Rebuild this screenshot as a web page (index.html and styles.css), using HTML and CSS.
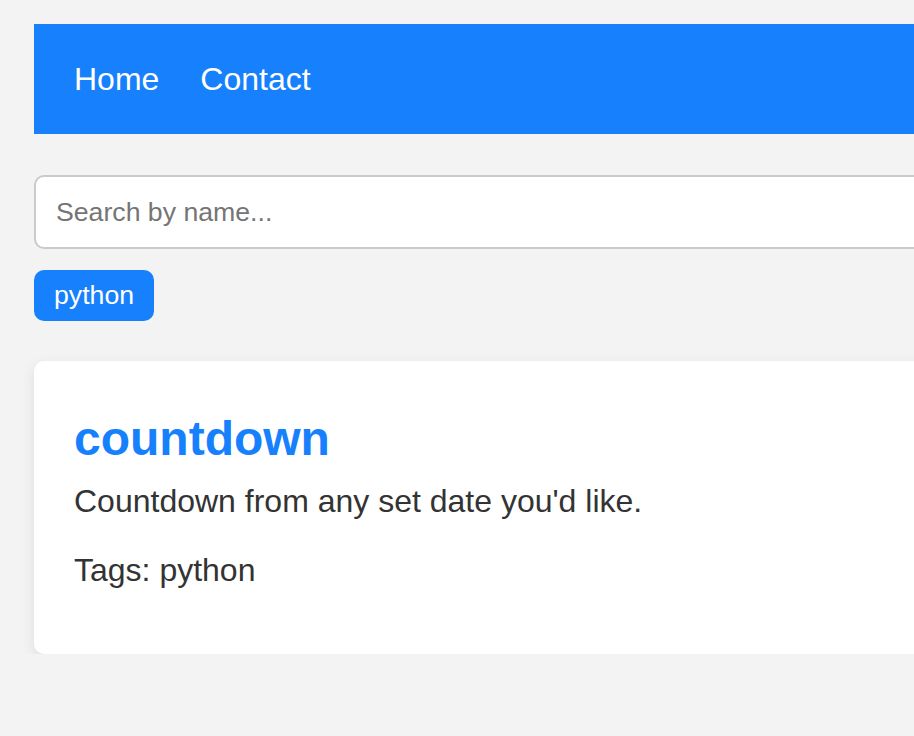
FILE: index.html
```html
<!DOCTYPE html>
<html lang="en">
<head>
<meta charset="utf-8">
<title>Projects</title>
<link rel="stylesheet" href="styles.css">
</head>
<body>
<div class="page">
  <nav class="nav">
    <a class="nav-link" href="#">Home</a>
    <a class="nav-link" href="#">Contact</a>
  </nav>
  <input class="search" type="text" placeholder="Search by name...">
  <div class="tags">
    <button class="tag-btn" type="button">python</button>
  </div>
  <div class="card">
    <h2 class="card-title">countdown</h2>
    <p class="card-desc">Countdown from any set date you'd like.</p>
    <p class="card-tags">Tags: python</p>
  </div>
</div>
</body>
</html>
```

FILE: styles.css
```css
html {
  overflow: hidden;
}
body {
  margin: 0;
  background: #f3f3f3;
  font-family: "Liberation Sans", Arial, Helvetica, sans-serif;
  color: #333;
}
.page {
  width: 1200px;
  padding: 24px 0 0 34px;
  display: flex;
  flex-direction: column;
  align-items: flex-start;
}
.nav {
  align-self: stretch;
  box-sizing: border-box;
  height: 110px;
  background: #1780fc;
  display: flex;
  align-items: center;
  gap: 41px;
  padding: 0 40px;
}
.nav-link {
  color: #fff;
  text-decoration: none;
  font-size: 32px;
  line-height: 37px;
}
.search {
  align-self: stretch;
  box-sizing: border-box;
  margin-top: 41px;
  height: 74px;
  border: 2px solid #cacaca;
  border-radius: 10px;
  background: #fff;
  padding: 0 20px;
  font-family: "Liberation Sans", Arial, sans-serif;
  font-size: 26.67px;
  color: #333;
  outline: none;
}
.search::placeholder {
  color: #757575;
}
.tags {
  margin-top: 21px;
  display: flex;
}
.tag-btn {
  height: 51px;
  padding: 0 20px;
  border: none;
  border-radius: 10px;
  background: #1780fc;
  color: #fff;
  font-family: "Liberation Sans", Arial, sans-serif;
  font-size: 26.67px;
  line-height: 31px;
}
.card {
  align-self: stretch;
  margin-top: 40px;
  background: #fff;
  border-radius: 10px;
  padding: 40px 40px 65px;
  box-shadow: 0 4px 14px rgba(0, 0, 0, 0.09);
}
.card-title {
  margin: 10px 0 0;
  font-size: 48px;
  line-height: 55px;
  font-weight: bold;
  color: #1780fc;
}
.card-desc,
.card-tags {
  font-size: 32px;
  line-height: 37px;
}
.card-desc {
  margin: 17px 0 0;
}
.card-tags {
  margin: 32px 0 0;
}
```
